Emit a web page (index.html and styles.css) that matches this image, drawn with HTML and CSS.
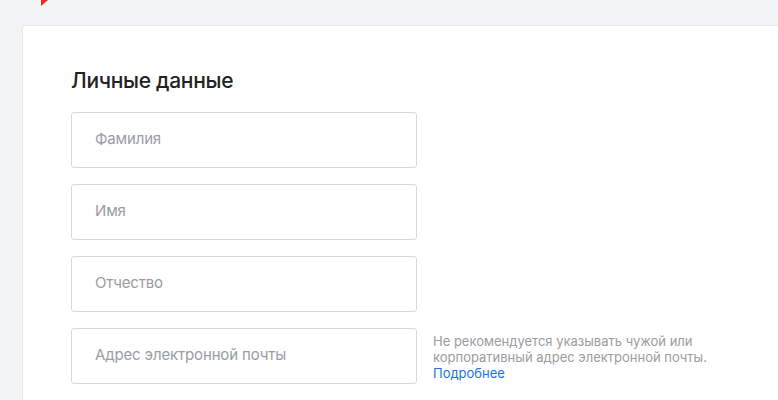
FILE: index.html
```html
<!DOCTYPE html>
<html lang="ru">
<head>
<meta charset="utf-8">
<link rel="stylesheet" href="styles.css">
</head>
<body>
<div class="top">
  <svg class="logo" width="8" height="7" viewBox="0 0 8 7"><polygon points="0,0 7,0 0,6" fill="#f0281e"/></svg>
</div>
<main class="card">
  <h2 class="title">Личные данные</h2>
  <div class="fields">
    <div class="row"><div class="input">Фамилия</div></div>
    <div class="row"><div class="input">Имя</div></div>
    <div class="row"><div class="input">Отчество</div></div>
    <div class="row">
      <div class="input">Адрес электронной почты</div>
      <p class="hint">Не рекомендуется указывать чужой или корпоративный адрес электронной почты. <a href="#" class="link">Подробнее</a></p>
    </div>
  </div>
</main>
</body>
</html>
```
FILE: styles.css
```css
html, body {
  margin: 0;
  padding: 0;
  height: 100%;
  background: #f2f3f5;
  font-family: Inter, "Noto Sans", sans-serif;
  overflow: hidden;
}
.top {
  height: 25px;
  position: relative;
}
.logo {
  position: absolute;
  left: 41px;
  top: 0;
}
.card {
  box-sizing: border-box;
  height: 375px;
  margin-left: 22px;
  background: #fff;
  border: 1px solid #e6e8eb;
  border-right: none;
  border-bottom: none;
  border-radius: 4px 0 0 0;
  padding: 40px 0 0 48px;
}
.title {
  margin: 0 0 16px;
  font-size: 21px;
  line-height: 30px;
  font-weight: 500;
  letter-spacing: -0.3px;
  color: #222;
}
.fields {
  display: flex;
  flex-direction: column;
  gap: 16px;
}
.row {
  display: flex;
  align-items: flex-start;
  gap: 16px;
}
.input {
  box-sizing: border-box;
  width: 346px;
  height: 56px;
  border: 1px solid #d5d8dc;
  border-radius: 3px;
  padding: 0 23px 3px;
  display: flex;
  align-items: center;
  font-size: 15px;
  letter-spacing: -0.15px;
  color: #999ca3;
}
.hint {
  margin: 5px 0 0;
  width: 290px;
  font-size: 13px;
  line-height: 16px;
  color: #9a9ca0;
}
.link {
  color: #1a73e8;
  text-decoration: none;
}
```
